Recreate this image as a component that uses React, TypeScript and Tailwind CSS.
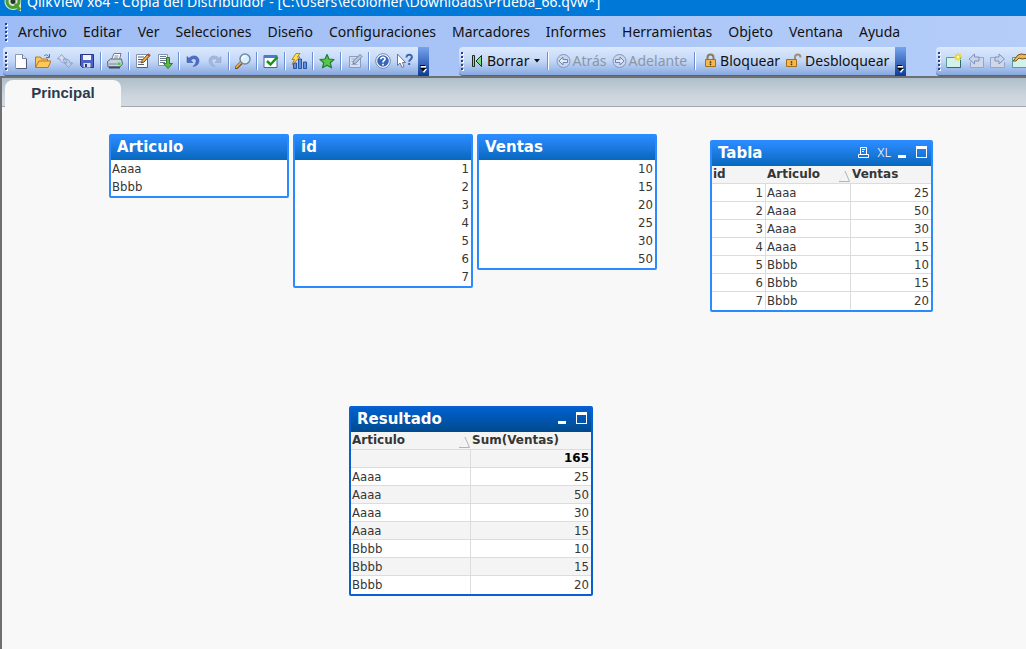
import React from 'react';
import { clsx } from 'clsx';

const menus = [
  'Archivo', 'Editar', 'Ver', 'Selecciones', 'Diseño', 'Configuraciones',
  'Marcadores', 'Informes', 'Herramientas', 'Objeto', 'Ventana', 'Ayuda',
];

const ventas = [
  { id: 1, articulo: 'Aaaa', ventas: 25 },
  { id: 2, articulo: 'Aaaa', ventas: 50 },
  { id: 3, articulo: 'Aaaa', ventas: 30 },
  { id: 4, articulo: 'Aaaa', ventas: 15 },
  { id: 5, articulo: 'Bbbb', ventas: 10 },
  { id: 6, articulo: 'Bbbb', ventas: 15 },
  { id: 7, articulo: 'Bbbb', ventas: 20 },
];

export default function App() {
  return (
    <div className="min-h-screen flex flex-col bg-[#f8f8f8] overflow-hidden font-['Noto_Sans',sans-serif] text-sm leading-5 text-[#111] whitespace-nowrap">
      <header className="h-4 shrink-0 bg-[#0078d7] flex items-end gap-1 px-1 pb-1 overflow-hidden text-white">
        <AppLogo />
        <h1>QlikView x64 - Copia del Distribuidor - [C:\Users\ecolomer\Downloads\Prueba_66.qvw*]</h1>
      </header>

      <div className="shrink-0 bg-linear-to-r from-[#9ebcf5] to-[#b4cdf9]">
        <nav className="h-[31px] flex items-center gap-4 pl-[5px]">
          <Grip />
          {menus.map(m => (
            <button key={m} type="button" className="first-of-type:-ml-2">{m}</button>
          ))}
        </nav>
        <div className="flex pl-[3px]">
          <StandardBar />
          <NavigationBar />
          <SheetBar />
        </div>
      </div>

      <main className="grow flex flex-col border-t-2 border-l-2 border-[#6d6f73]">
        <div role="tablist" className="h-[29px] shrink-0 flex items-end pl-[3px] bg-linear-to-b from-[#aebfca] via-[#cbd4dc] via-60% to-[#d3d9e1] border-b border-[#a3a8ac]">
          <button
            type="button"
            role="tab"
            aria-selected="true"
            className="h-[27px] w-[116px] pb-[2px] -mb-px rounded-t-lg bg-[#f8f8f8] font-['Liberation_Sans',sans-serif] font-bold text-[15px] text-[#2b3a4e]"
          >
            Principal
          </button>
        </div>
        <Sheet />
      </main>
    </div>
  );
}

function Sheet() {
  return (
    <div className="relative grow min-h-[540px] bg-[#f8f8f8] font-['DejaVu_Sans_Condensed','Noto_Sans',sans-serif] text-[13px] leading-[18px] text-[#363636]">
      <ListBox title="Articulo" values={['Aaaa', 'Bbbb']} className="left-[107px] top-[27px]" />
      <ListBox title="id" values={[1, 2, 3, 4, 5, 6, 7]} className="left-[291px] top-[27px]" />
      <ListBox title="Ventas" values={[10, 15, 20, 25, 30, 50]} className="left-[475px] top-[27px]" />

      <SheetObject title="Tabla" className="left-[708px] top-[33px] w-[223px]" actions={<><PrintIcon /><ExcelIcon /><MinimizeIcon /><MaximizeIcon /></>}>
        <table className="w-full table-fixed border-separate border-spacing-0">
          <colgroup>
            <col className="w-[54px]" />
            <col className="w-[85px]" />
            <col />
          </colgroup>
          <thead>
            <tr className="bg-[#f4f4f4]">
              <Head>id</Head>
              <Head sorted>Articulo</Head>
              <Head>Ventas</Head>
            </tr>
          </thead>
          <tbody>
            {ventas.map(v => (
              <tr key={v.id} className="group">
                <Cell right>{v.id}</Cell>
                <Cell>{v.articulo}</Cell>
                <Cell right last>{v.ventas}</Cell>
              </tr>
            ))}
          </tbody>
        </table>
      </SheetObject>

      <SheetObject title="Resultado" active className="left-[347px] top-[299px] w-[244px]" actions={<><MinimizeIcon /><MaximizeIcon /></>}>
        <table className="w-full table-fixed border-separate border-spacing-0">
          <colgroup>
            <col className="w-[120px]" />
            <col />
          </colgroup>
          <thead>
            <tr className="bg-[#f4f4f4]">
              <Head sorted>Articulo</Head>
              <Head>Sum(Ventas)</Head>
            </tr>
          </thead>
          <tbody>
            <tr className="group bg-[#f4f4f4] font-['DejaVu_Sans',sans-serif] text-xs font-bold text-black">
              <Cell />
              <Cell right last>165</Cell>
            </tr>
            {ventas.map(v => (
              <tr key={v.id} className="group even:bg-white odd:bg-[#f4f4f4]">
                <Cell>{v.articulo}</Cell>
                <Cell right last>{v.ventas}</Cell>
              </tr>
            ))}
          </tbody>
        </table>
      </SheetObject>
    </div>
  );
}

function SheetObject({ title, active, actions, className, children }: any) {
  return (
    <section className={clsx('absolute rounded-[2px] border-2 bg-white', active ? 'border-[#0a5fd0]' : 'border-[#2a8bff]', className)}>
      <div
        className={clsx(
          'h-6 flex items-center justify-between pl-[6px] pr-[3px] pb-[2px] text-white bg-linear-to-b',
          active ? 'from-[#0060d0] to-[#004a8c]' : 'from-[#2a8bff] to-[#0668bd]'
        )}
      >
        <h2 className="font-['DejaVu_Sans',sans-serif] font-bold text-[15px] leading-[22px]">{title}</h2>
        {actions && <div className="flex items-center gap-[6px]">{actions}</div>}
      </div>
      {children}
    </section>
  );
}

function ListBox({ title, values, className }: any) {
  const numeric = typeof values[0] === 'number';
  return (
    <SheetObject title={title} className={clsx('w-[180px]', className)}>
      <ul className={clsx('pl-px pr-[2px]', numeric && 'text-right')}>
        {values.map((v: any) => <li key={v}>{v}</li>)}
      </ul>
    </SheetObject>
  );
}

function Head({ sorted, children }: any) {
  return (
    <th className="h-[18px] p-0 border-b border-[#dcdcdc] text-left font-['DejaVu_Sans',sans-serif] text-xs font-bold leading-[17px]">
      <div className="flex items-end justify-between pl-px">
        {children}
        {sorted && (
          <svg width="12" height="14" viewBox="0 0 12 14" aria-hidden="true">
            <path d="M0.500 12L6 2" stroke="#ececec" fill="none" />
            <path d="M6 2l4.500 10.500H0" stroke="#b4b4b4" fill="none" />
          </svg>
        )}
      </div>
    </th>
  );
}

function Cell({ right, last, children }: any) {
  return (
    <td
      className={clsx(
        'h-[18px] pl-px pr-[2px] py-0 leading-[17px] border-b border-[#dcdcdc] group-last:border-b-transparent',
        !last && 'border-r',
        right && 'text-right'
      )}
    >
      {children}
    </td>
  );
}

/* Toolbars */

function Bar({ children, className }: any) {
  return (
    <div className={clsx('h-[29px] flex rounded-l-sm bg-linear-to-b from-[#dce9fd] via-[#c3d7f7] via-50% to-[#86a8e0] border-b border-[#3d66b3]', className)}>
      <div className="flex items-center pl-[2px]">
        <Grip />
        {children}
      </div>
    </div>
  );
}

function Grip() {
  return (
    <svg width="5" height="20" viewBox="0 0 5 20" className="shrink-0" aria-hidden="true">
      {[1, 5, 9, 13, 17].map(y => (
        <g key={y}>
          <rect x="1" y={y + 1} width="2" height="2" fill="#fff" />
          <rect x="0" y={y} width="2" height="2" fill="#27418c" />
        </g>
      ))}
    </svg>
  );
}

function Divider() {
  return <div className="mx-[2px] h-[18px] w-[2px] shrink-0 bg-[#6b8fd0] border-r border-white" />;
}

function Overflow() {
  return (
    <button type="button" aria-label="Opciones de barra" className="-mb-px ml-[2px] w-[11px] h-[29px] self-start shrink-0 flex items-end justify-center pb-[3px] bg-linear-to-b from-[#77a4ee] to-[#0a3b97]">
      <svg width="7" height="8" viewBox="0 0 7 8">
        <path d="M1 1h5v1.500H1zM1 4h6L4 8z" fill="#fff" />
        <path d="M0 0h5v1H0zM0 3h6L3 6.500z" fill="#000" />
      </svg>
    </button>
  );
}

function Tool({ label, children }: any) {
  return (
    <button type="button" aria-label={label} className="w-[22px] h-[22px] shrink-0 flex items-center justify-center">
      <svg width="16" height="16" viewBox="0 0 16 16">{children}</svg>
    </button>
  );
}

function TextTool({ children, disabled }: any) {
  return (
    <button type="button" disabled={disabled} className="h-[22px] shrink-0 flex items-center gap-[2px] disabled:text-[#8d95a3]">
      {children}
    </button>
  );
}

function StandardBar() {
  return (
    <Bar className="w-[426px]">
      <Tool label="Nuevo">
        <path d="M2.500 1.500h7l4 4v10h-11z" fill="#fdfdff" stroke="#8e9bb4" />
        <path d="M9.500 1.500v4h4" fill="#dfe6f2" stroke="#6c7c9b" />
        <path d="M13.500 6v9.500h-10" fill="none" stroke="#4f5d7b" />
      </Tool>
      <Tool label="Abrir">
        <path d="M.5 14V4h5l1 2h6v3" fill="#f7c663" stroke="#b87a1c" />
        <path d="M.5 14.500L4 8h12l-3 6.500z" fill="#ffc65a" stroke="#b9761a" />
        <path d="M9 3c2-2 4-1 5 1M14.500 1v3.500H11" fill="none" stroke="#4c78a8" />
      </Tool>
      <Tool label="Recargar">
        <path d="M.5 6L4.500 1.500 8.500 6H6.200c0 2 .8 3 2.300 4C5 10 3 8.500 3 6z" fill="#d8e0f0" stroke="#8195bf" strokeWidth=".8" />
        <path d="M15.500 10l-4 4.500-4-4.500h2.300c0-2-.8-3-2.300-4C11 6 13 7.500 13 10z" fill="#c0cce4" stroke="#8195bf" strokeWidth=".8" />
      </Tool>
      <Tool label="Guardar">
        <path d="M1.500 1.500h13v13h-11l-2-2z" fill="#4b62c4" stroke="#26367f" />
        <path d="M4 2h8v5H4z" fill="#eef3ff" />
        <path d="M4.500 10h7v4.500h-7z" fill="#d8dff0" />
        <path d="M6 11h2v3H6z" fill="#26367f" />
      </Tool>
      <Divider />
      <Tool label="Imprimir">
        <path d="M4.500 6.500L7 .5h7L12.500 6.500z" fill="#fff" stroke="#657a94" />
        <path d="M.5 8.500L3.500 6h11l1 5-2.500 3H1z" fill="#c9d3dd" stroke="#55657a" />
        <path d="M2 11h8M7.500 3h4M7 5h4" stroke="#7a8798" />
        <path d="M2 13.500h11v2H2z" fill="#3d4a5f" />
        <path d="M10.500 9.500h3v2.500h-3z" fill="#49ce32" />
      </Tool>
      <Divider />
      <Tool label="Editar script">
        <path d="M1.500 1.500h11v13h-11z" fill="#fff" stroke="#8593ac" />
        <path d="M12.500 6v8.500H2M3 4h6M3 6.500h5M3 9h3M3 11.500h6" fill="none" stroke="#53617c" />
        <path d="M6.500 10L7 7.500 13 1l2 1.500-6 6.500z" fill="#f0b050" stroke="#6d4520" />
        <path d="M12 2l1.500-1.500L15.500 2 14 3.500z" fill="#c5423b" />
      </Tool>
      <Tool label="Mostrar datos">
        <path d="M1.500 1.500h9v11h-9z" fill="#fff" stroke="#8593ac" />
        <path d="M3 3.500h6M3 5.500h6M3 7.500h6M3 9.500h5" stroke="#6b7890" />
        <path d="M9.500 4.500h3v6h3L11 15.500 6.500 10.500h3z" fill="#60b746" stroke="#2d7e29" />
      </Tool>
      <Divider />
      <Tool label="Deshacer">
        <path d="M2 3.500v6h6L5.800 7.300C8 4.500 12 5.500 11 9c-.4 2-1.500 3-3 4.500 4-.5 6-2.500 6-6 0-4.500-6-6.500-10-2.200z" fill="#4b6fc6" stroke="#2f4f9f" strokeWidth=".5" />
      </Tool>
      <Tool label="Rehacer">
        <path d="M14 3.500v6H8l2.200-2.200C8 4.500 4 5.500 5 9c.4 2 1.500 3 3 4.500-4-.5-6-2.500-6-6C2 3 8 1 12 5.300z" fill="#a5b7dc" stroke="#8c9fca" strokeWidth=".5" />
      </Tool>
      <Divider />
      <Tool label="Buscar">
        <path d="M1.500 14.500L6 10" stroke="#7a4813" strokeWidth="3.500" strokeLinecap="round" />
        <path d="M1.500 14L6 9.500" stroke="#eda646" strokeWidth="2" strokeLinecap="round" />
        <circle cx="10" cy="6" r="5" fill="#d8f0fb" stroke="#7189a9" strokeWidth="1.500" />
        <path d="M7 6c0-2 1.500-3 3.500-3" fill="none" stroke="#fff" strokeWidth="1.500" />
      </Tool>
      <Divider />
      <Tool label="Selecciones actuales">
        <path d="M1 2.500h13v12H1z" fill="#fff" stroke="#4263a4" />
        <path d="M1 2h13v3H1z" fill="#4e78cb" />
        <path d="M4 8l3.500 3.500L14.500 4" fill="none" stroke="#16951c" strokeWidth="2.500" />
      </Tool>
      <Divider />
      <Tool label="Asistente de gráficos">
        <path d="M2.500 10h3v5.500h-3zM7.500 6h3v9.500h-3zM12.500 9h3v6.500h-3z" fill="#5f91e2" stroke="#2b52a2" />
        <path d="M5 .5h4L6.500 4H9L1 11.500 3.500 6.500H1z" fill="#ffe14c" stroke="#a17018" strokeWidth=".8" />
      </Tool>
      <Divider />
      <Tool label="Agregar marcador">
        <path d="M8 1.500l2 4.500 5 .5-3.700 3.300 1.200 5L8 12.200l-4.500 2.600 1.200-5L1 6.500 6 6z" fill="#53c74b" stroke="#227f2b" strokeWidth="1.200" strokeLinejoin="round" />
      </Tool>
      <Divider />
      <Tool label="Notas">
        <path d="M2.500 3.500h11v11h-11z" fill="#d4dff1" stroke="#8b9bba" />
        <path d="M4.500 6h4M4.500 8.500h2M4.500 11.500h6" stroke="#9baac5" />
        <path d="M6 11l.5-3L13 1.500l2 2L9 10z" fill="#b7c4db" stroke="#7888a7" />
      </Tool>
      <Divider />
      <Tool label="Ayuda">
        <circle cx="8" cy="8" r="7.300" fill="#fff" stroke="#7485ab" />
        <circle cx="8" cy="8" r="5.800" fill="#3466be" />
        <path d="M5.800 6.200C6 3.500 10.500 3.700 10 6.300 9.800 7.500 8 7.500 8 9.500M8 10.800v1.600" fill="none" stroke="#fff" strokeWidth="1.700" />
      </Tool>
      <Tool label="¿Qué es esto?">
        <path d="M.5 1v11.500L3 10l2 4.500 2-1L5.500 9.500H8.500z" fill="#fff" stroke="#67779b" />
        <path d="M9.500 4.500C9.500.5 15.500 1 14.800 4.500 14.500 6.500 12.200 6.500 12.200 8.800M12.200 10v2" fill="none" stroke="#3b63ae" strokeWidth="2" />
      </Tool>
      <Overflow />
    </Bar>
  );
}

function NavigationBar() {
  return (
    <Bar className="ml-[30px]">
      <div className="flex items-center gap-[5px] pl-[5px]">
        <TextTool>
          <svg width="14" height="16" viewBox="0 0 14 16" aria-hidden="true">
            <path d="M1.500 2.500h2v11h-2z" fill="#8fdc92" stroke="#1c2c1e" />
            <path d="M10.500 2.500v11L5 8z" fill="#75dc7c" stroke="#1c2c1e" />
          </svg>
          Borrar
          <svg width="8" height="4" viewBox="0 0 8 4" aria-hidden="true"><path d="M2 0h6L5 3.500z" fill="#111" /></svg>
        </TextTool>
        <Divider />
        <TextTool disabled><RoundArrow />Atrás</TextTool>
        <TextTool disabled><RoundArrow forward />Adelante</TextTool>
        <Divider />
        <TextTool>
          <svg width="15" height="16" viewBox="0 0 15 16" aria-hidden="true">
            <path d="M4.500 8V4.500c0-4 6-4 6 0V8" fill="none" stroke="#8a7b62" strokeWidth="2" />
            <path d="M2.500 6.500h10v7h-10z" fill="#f3b94e" stroke="#a66d17" />
            <path d="M7 8.500h1v1H7zM6.500 10h2M7 11h1v1H7z" fill="#4f3109" stroke="#4f3109" strokeWidth=".5" />
          </svg>
          Bloquear
        </TextTool>
        <TextTool>
          <svg width="18" height="16" viewBox="0 0 18 16" aria-hidden="true">
            <path d="M10 8V4.500c0-4 5.500-4 5.500 0" fill="none" stroke="#a18f71" strokeWidth="2" />
            <path d="M1.500 6.500h10v7h-10z" fill="#f3b94e" stroke="#a66d17" />
            <path d="M6 8.500h1v1H6zM5.500 10h2M6 11h1v1H6z" fill="#4f3109" stroke="#4f3109" strokeWidth=".5" />
          </svg>
          Desbloquear
        </TextTool>
      </div>
      <div className="pl-1"><Overflow /></div>
    </Bar>
  );
}

function SheetBar() {
  return (
    <Bar className="grow ml-[30px]">
      <Tool label="Agregar hoja">
        <path d="M.5 4.500h14v10H.5z" fill="#d3f2ec" stroke="#5c9c96" />
        <path d="M14.500 5v9.500H1" fill="none" stroke="#2a7067" />
        <path d="M12 0v8M8 4h8M9.200 1.200l5.600 5.600M14.800 1.200L9.200 6.800" stroke="#e8d22e" strokeWidth="1.300" />
        <circle cx="12" cy="4" r="1.500" fill="#fff9a8" />
      </Tool>
      <Tool label="Hoja anterior">
        <path d="M5 4.500h10.500v10H2.500V9" fill="#cfd7e8" stroke="#98a5c2" />
        <path d="M6.500 1v3H11v4H6.500v3L1 6z" fill="#c7d4ee" stroke="#7f92bb" />
      </Tool>
      <Tool label="Hoja siguiente">
        <path d="M6 4.500H.5v10h14V9" fill="#cfd7e8" stroke="#98a5c2" />
        <path d="M9 1v3H5v4h4v3l5.500-5z" fill="#c7d4ee" stroke="#7f92bb" />
      </Tool>
      <Tool label="Propiedades de hoja">
        <path d="M.5 4.500h15v10H.5z" fill="#d3f2ec" stroke="#5c9c96" />
        <path d="M1 8l5-6 3-1 7 1v3l-6 1-3-1-3 3z" fill="#e9b957" stroke="#765019" />
      </Tool>
    </Bar>
  );
}

function RoundArrow({ forward }: any) {
  return (
    <svg width="15" height="16" viewBox="0 0 15 16" className={forward && 'rotate-180'} aria-hidden="true">
      <circle cx="7.500" cy="8" r="6.500" fill="#c9d6ee" stroke="#8496bd" />
      <path d="M3 8l4-4v2.500h4.500v3H7V12z" fill="#e4ebf8" stroke="#7084af" />
    </svg>
  );
}

function AppLogo() {
  return (
    <svg width="19" height="19" viewBox="0 0 19 19" className="shrink-0" aria-hidden="true">
      <path d="M9 0a8.500 8.500 0 1 0 4 16l4 2.500V10A8.500 8.500 0 0 0 9 0z" fill="#d9e5d5" />
      <circle cx="9" cy="8.500" r="6" fill="none" stroke="#4b9c33" strokeWidth="3" />
      <path d="M11 11l5 6" stroke="#4b9c33" strokeWidth="3" />
      <circle cx="9" cy="8.500" r="2.500" fill="#26382a" />
    </svg>
  );
}

/* Caption icons */

function PrintIcon() {
  return (
    <svg width="13" height="14" viewBox="0 0 13 14" role="img" aria-label="Imprimir">
      <path d="M2.500 8.500v-7h6v7M4 3.500h3M4 5.500h2M.5 11.500v-3h10v3z" fill="none" stroke="#fff" />
    </svg>
  );
}

function ExcelIcon() {
  return <span className="font-['Roboto',sans-serif] font-light text-xs leading-4">XL</span>;
}

function MinimizeIcon() {
  return (
    <svg width="13" height="14" viewBox="0 0 13 14" role="img" aria-label="Minimizar">
      <path d="M1 9h8v3H1z" fill="#fff" />
    </svg>
  );
}

function MaximizeIcon() {
  return (
    <svg width="12" height="14" viewBox="0 0 12 14" role="img" aria-label="Maximizar">
      <path d="M0 0h11v12H0zM1 3v8h9V3z" fill="#fff" fillRule="evenodd" />
    </svg>
  );
}
